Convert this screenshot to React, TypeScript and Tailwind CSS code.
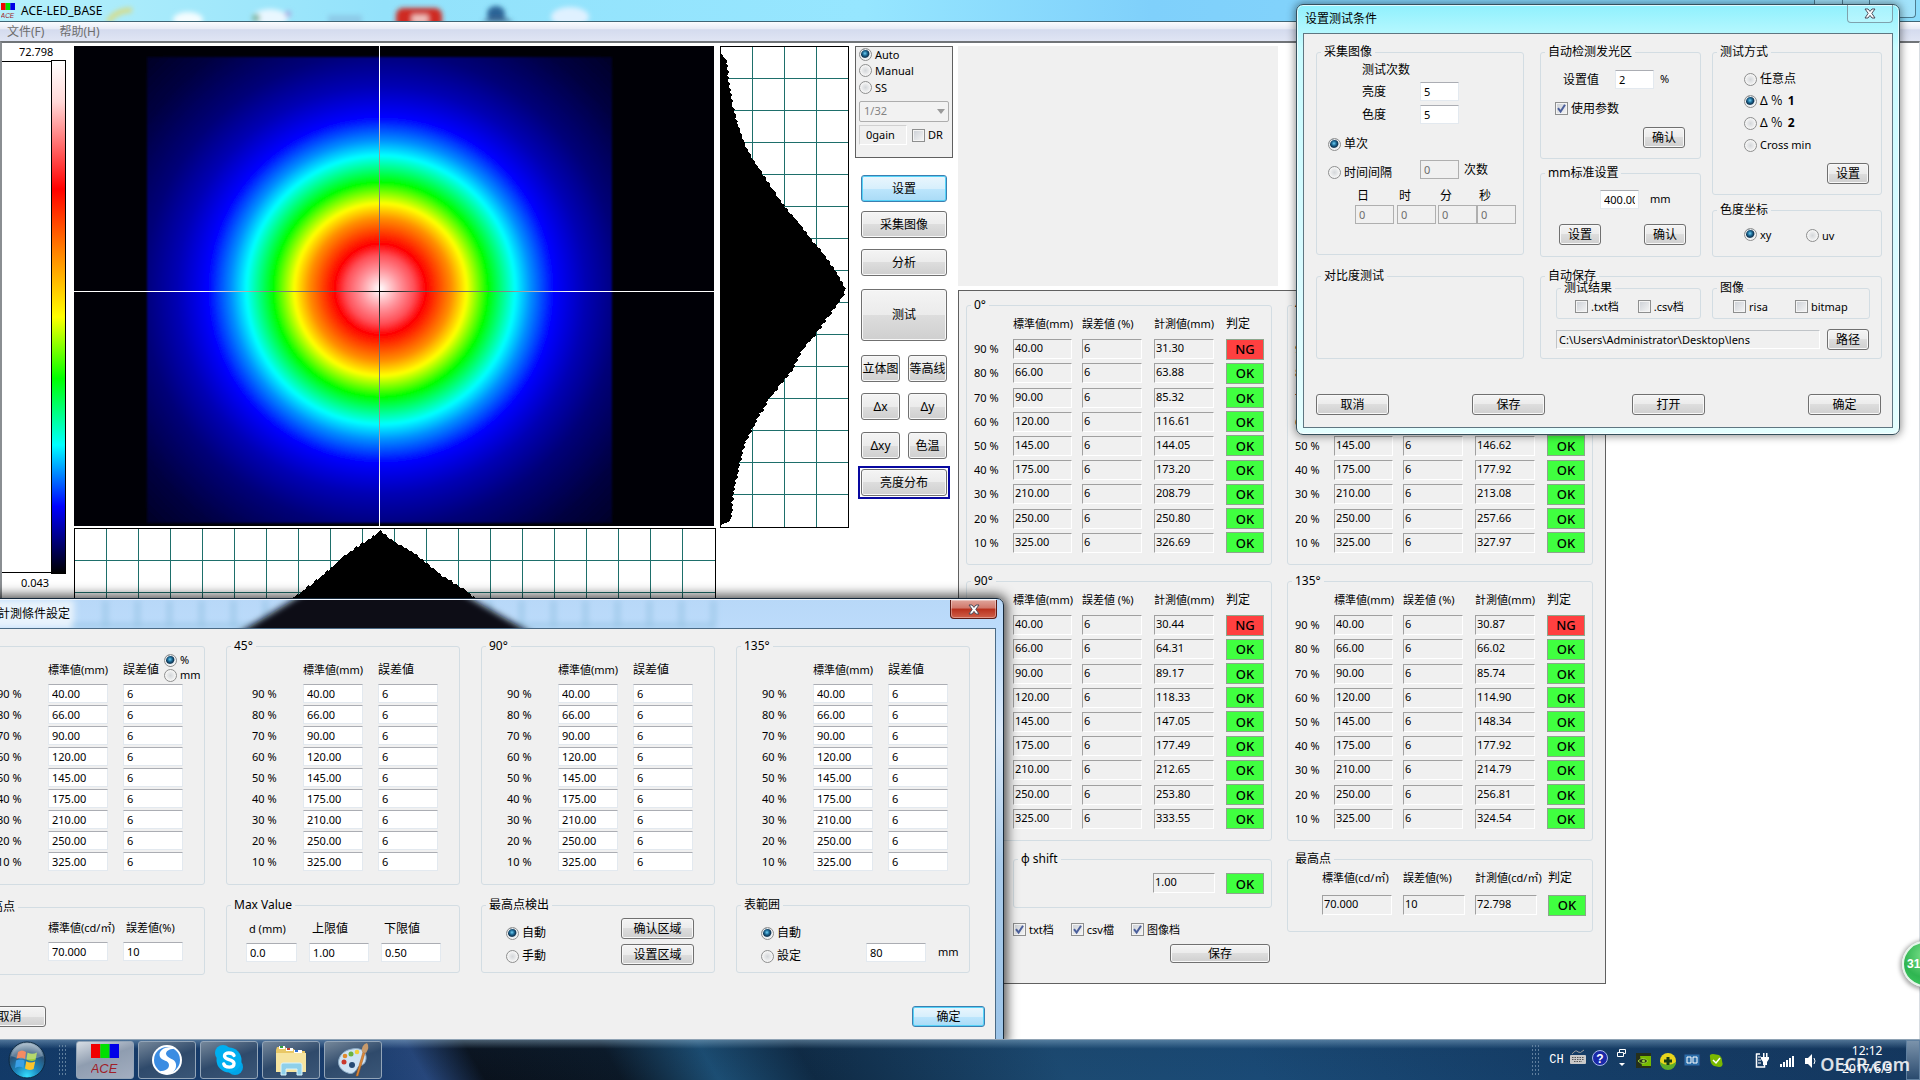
import type { ReactNode } from "react";

const PERCENTS = [90, 80, 70, 60, 50, 40, 30, 20, 10];
const STANDARD = ["40.00", "66.00", "90.00", "120.00", "145.00", "175.00", "210.00", "250.00", "325.00"];

const MEASURED: Record<string, string[]> = {
  "0°": ["31.30", "63.88", "85.32", "116.61", "144.05", "173.20", "208.79", "250.80", "326.69"],
  "45°": ["31.10", "64.75", "86.60", "117.04", "146.62", "177.92", "213.08", "257.66", "327.97"],
  "90°": ["30.44", "64.31", "89.17", "118.33", "147.05", "177.49", "212.65", "253.80", "333.55"],
  "135°": ["30.87", "66.02", "85.74", "114.90", "148.34", "177.92", "214.79", "256.81", "324.54"],
};

/* ---------- shared controls ---------- */

function Group({ title, className = "", body = "", children }: { title: string; className?: string; body?: string; children?: ReactNode }) {
  return (
    <fieldset className={`min-w-0 rounded-[3px] border border-[#d3dde3] ${className}`}>
      <legend className="ml-1 px-[3px] text-[12px] leading-3 whitespace-nowrap">{title}</legend>
      <div className={body}>{children}</div>
    </fieldset>
  );
}

function Btn({ children, className = "", primary = false }: { children: ReactNode; className?: string; primary?: boolean }) {
  const look = primary
    ? "border-[#3c7fb1] bg-[linear-gradient(#eaf6fd,#d7effc_50%,#bde6fd_50%,#a9dbf6)] shadow-[inset_0_0_0_1px_#55d3f8]"
    : "border-[#707070] bg-[linear-gradient(#f4f4f4,#ebebeb_50%,#dddddd_50%,#cfcfcf)] shadow-[inset_0_0_0_1px_#f8f8f8]";
  return (
    <button type="button" className={`flex shrink-0 items-center justify-center rounded-[3px] border text-[12px] leading-3 whitespace-nowrap ${look} ${className}`}>
      {children}
    </button>
  );
}

function Radio({ name, label, checked = false, className = "" }: { name: string; label: ReactNode; checked?: boolean; className?: string }) {
  return (
    <label className={`flex items-center gap-[3px] leading-3 whitespace-nowrap ${className}`}>
      <input
        type="radio"
        name={name}
        defaultChecked={checked}
        className="h-[13px] w-[13px] shrink-0 appearance-none rounded-full border border-[#8e8f8f] bg-[radial-gradient(circle,#d4d7da,#f6f6f6_70%)] shadow-[inset_0_0_0_1px_#f4f4f4] checked:bg-[radial-gradient(circle_at_45%_40%,#6fd0f5_0,#1d6a96_25%,#0f3350_44%,#e8eef2_56%)]"
      />
      {label}
    </label>
  );
}

function Check({ label, checked = false, className = "" }: { label: ReactNode; checked?: boolean; className?: string }) {
  return (
    <label className={`flex items-center gap-[3px] leading-3 whitespace-nowrap ${className}`}>
      <span className="grid shrink-0">
        <input
          type="checkbox"
          defaultChecked={checked}
          className="peer col-start-1 row-start-1 h-[13px] w-[13px] appearance-none border border-[#8e8f8f] bg-[linear-gradient(135deg,#cbcfd5,#f6f6f6)] shadow-[inset_0_0_0_1px_#f4f4f4]"
        />
        <svg viewBox="0 0 13 13" className="pointer-events-none invisible col-start-1 row-start-1 h-[13px] w-[13px] peer-checked:visible">
          <path d="M3 6.2 L5.6 9.6 L10 2.8" fill="none" stroke="#4b5f9b" strokeWidth="2" />
        </svg>
      </span>
      {label}
    </label>
  );
}

function Field({ value, label, className = "", disabled = false }: { value: string; label: string; className?: string; disabled?: boolean }) {
  const look = disabled ? "border-[#afafaf] bg-[#f0f0f0] text-[#6d6d6d]" : "border-[#e3e9ef] border-t-[#abadb3] bg-white";
  return (
    <input
      type="text"
      aria-label={label}
      defaultValue={value}
      disabled={disabled}
      className={`block h-[19px] shrink-0 border px-[3px] text-[11px] leading-4 ${look} ${className}`}
    />
  );
}

function Sunken({ value, label, className = "" }: { value: string; label: string; className?: string }) {
  return (
    <input
      type="text"
      readOnly
      aria-label={label}
      defaultValue={value}
      className={`block h-5 border border-white border-t-[#a0a0a0] border-l-[#a0a0a0] bg-[#f0f0f0] px-px pb-[3px] text-[11px] leading-4 ${className}`}
    />
  );
}

function Verdict({ ok }: { ok: boolean }) {
  return (
    <div className={`flex h-[21px] w-[38px] items-center justify-center border border-[#8ca68c] text-[13px] leading-4 font-medium ${ok ? "bg-[#40ff40]" : "bg-[#ff4040]"}`}>
      {ok ? "OK" : "NG"}
    </div>
  );
}

/* ---------- drawings ---------- */

function HeatMap() {
  return (
    <svg viewBox="0 0 640 480" className="block h-[480px] w-[640px]">
      <defs>
        <radialGradient id="lum" gradientUnits="userSpaceOnUse" cx="308" cy="245" r="340" fx="306" fy="243">
          <stop offset="0" stopColor="#fff" />
          <stop offset=".025" stopColor="#ffd0d4" />
          <stop offset=".06" stopColor="#ff9098" />
          <stop offset=".10" stopColor="#ff5058" />
          <stop offset=".134" stopColor="#f00" />
          <stop offset=".16" stopColor="#ff3000" />
          <stop offset=".21" stopColor="#ff9000" />
          <stop offset=".253" stopColor="#ff0" />
          <stop offset=".316" stopColor="#0f0" />
          <stop offset=".395" stopColor="#0ff" />
          <stop offset=".44" stopColor="#0090ff" />
          <stop offset=".51" stopColor="#00f" />
          <stop offset=".6" stopColor="#0000b4" />
          <stop offset=".7" stopColor="#000078" />
          <stop offset=".85" stopColor="#000040" />
          <stop offset="1" stopColor="#000020" />
        </radialGradient>
        <linearGradient id="crossX" x1="0" x2="1" y1="0" y2="0">
          <stop offset=".2" stopColor="#fff" />
          <stop offset=".3" stopColor="#888" />
          <stop offset=".43" stopColor="#555" />
          <stop offset=".478" stopColor="#000" />
          <stop offset=".53" stopColor="#555" />
          <stop offset=".68" stopColor="#888" />
          <stop offset=".78" stopColor="#fff" />
        </linearGradient>
        <linearGradient id="crossY" x1="0" x2="0" y1="0" y2="1">
          <stop offset=".1" stopColor="#fff" />
          <stop offset=".22" stopColor="#999" />
          <stop offset=".42" stopColor="#666" />
          <stop offset=".51" stopColor="#000" />
          <stop offset=".6" stopColor="#666" />
          <stop offset=".8" stopColor="#999" />
          <stop offset=".92" stopColor="#fff" />
        </linearGradient>
        <filter id="soften" x="-5%" y="-5%" width="110%" height="110%">
          <feGaussianBlur stdDeviation="1" />
        </filter>
      </defs>
      <rect width="640" height="480" fill="#000006" />
      <rect x="73" y="11" width="465" height="466" fill="url(#lum)" filter="url(#soften)" />
      <rect x="0" y="245" width="640" height="1" fill="url(#crossX)" />
      <rect x="305" y="0" width="1" height="480" fill="url(#crossY)" />
    </svg>
  );
}

function jagged(points: number[][], vertical: boolean) {
  const out: string[] = [];
  for (let i = 0; i < points.length - 1; i++) {
    const [x0, y0] = points[i];
    const [x1, y1] = points[i + 1];
    const steps = Math.max(1, Math.round(Math.abs(vertical ? y1 - y0 : x1 - x0) / 2));
    for (let s = 0; s < steps; s++) {
      const n = ((i * 7 + s * 5) % 3) - 1;
      const x = x0 + ((x1 - x0) * s) / steps + (vertical ? n : 0);
      const y = y0 + ((y1 - y0) * s) / steps + (vertical ? 0 : n);
      out.push(`${x.toFixed(0)},${y.toFixed(0)}`);
    }
  }
  out.push(points[points.length - 1].join(","));
  return out.join(" ");
}

const V_PROFILE = [
  [1, 7], [7, 16], [8, 32], [13, 61], [18, 79], [24, 97], [32, 112], [42, 127], [55, 147], [65, 161], [78, 176],
  [90, 192], [103, 207], [117, 227], [125, 242], [125, 247], [118, 257], [109, 269], [97, 287], [82, 304], [72, 324],
  [59, 341], [48, 354], [34, 379], [24, 399], [19, 421], [13, 447], [11, 474], [3, 478],
];

const H_PROFILE = [
  [183, 92], [221, 69], [238, 55], [257, 40], [268, 29], [290, 14], [307, 3], [320, 14], [339, 24], [355, 37],
  [370, 49], [387, 59], [400, 69], [437, 92],
];

function VerticalProfile() {
  return (
    <svg viewBox="0 0 129 482" className="block h-[482px] w-[129px] shrink-0" shapeRendering="crispEdges">
      <rect width="129" height="482" fill="#fff" />
      {[32, 64, 96].map((x) => <rect key={x} x={x} y="0" width="1" height="482" fill="#1e6f6b" />)}
      {Array.from({ length: 14 }, (_, i) => <rect key={i} x="0" y={(i + 1) * 32} width="129" height="1" fill="#1e6f6b" />)}
      <polygon points={`0,7 ${jagged(V_PROFILE, true)} 0,480`} />
      <rect x=".5" y=".5" width="128" height="481" fill="none" stroke="#000" />
    </svg>
  );
}

function HorizontalProfile() {
  return (
    <svg viewBox="0 0 642 130" className="mt-0.5 block h-[130px] w-[642px]" shapeRendering="crispEdges">
      <rect width="642" height="130" fill="#fff" />
      {Array.from({ length: 19 }, (_, i) => <rect key={i} x={(i + 1) * 32} y="0" width="1" height="130" fill="#1e6f6b" />)}
      {[32, 64, 96].map((y) => <rect key={y} x="0" y={y} width="642" height="1" fill="#1e6f6b" />)}
      <polygon points={`120,130 ${jagged(H_PROFILE, false)} 500,130`} />
      <rect x=".5" y=".5" width="641" height="129" fill="none" stroke="#000" />
    </svg>
  );
}

function AceLogo({ className }: { className: string }) {
  return (
    <svg viewBox="0 0 28 32" className={className}>
      <rect x="0" y="0" width="9.4" height="14" fill="#f00000" />
      <rect x="9.3" y="0" width="9.4" height="14" fill="#00e000" />
      <rect x="18.6" y="0" width="9.4" height="14" fill="#0000e8" />
      <text x="13" y="29" textAnchor="middle" fontSize="13" fontStyle="italic" fontFamily="Liberation Sans" fill="#a02028">ACE</text>
    </svg>
  );
}

/* ---------- main window ---------- */

function TitleBar() {
  return (
    <header className="grid h-[22px] shrink-0 border-b border-[#3f6575] bg-[linear-gradient(90deg,#b5f0fb,#93e2fb_20%,#96e6ff_45%,#7fd0fb_60%,#8bdcfb)]">
      <svg className="col-start-1 row-start-1 h-[21px] w-full" preserveAspectRatio="xMinYMin slice" viewBox="0 0 1920 21">
        <defs>
          <filter id="haze" x="-30%" y="-30%" width="160%" height="160%"><feGaussianBlur stdDeviation="2.5" /></filter>
        </defs>
        <g filter="url(#haze)">
          <path d="M108 22 Q116 10 132 10" stroke="#d7dc86" strokeWidth="5" fill="none" />
          <ellipse cx="188" cy="20" rx="15" ry="8" fill="#f4fdff" />
          <ellipse cx="270" cy="18" rx="18" ry="9" fill="#e9f7ff" />
          <circle cx="256" cy="18" r="4" fill="#7eb7a4" />
          <circle cx="288" cy="14" r="3" fill="#a9a5e0" />
          <rect x="328" y="15" width="34" height="10" fill="#8dcbe8" />
          <rect x="396" y="8" width="46" height="22" rx="7" fill="#cf2c20" />
          <rect x="412" y="15" width="16" height="8" fill="#f0c3bf" />
          <ellipse cx="496" cy="14" rx="9" ry="8" fill="#2c6496" />
          <path d="M482 22 Q496 12 514 22" fill="#3e668e" />
          <ellipse cx="570" cy="17" rx="19" ry="10" fill="#dff1ff" />
        </g>
      </svg>
      <div className="col-start-1 row-start-1 flex items-start">
        <div className="flex items-center gap-1.5 self-center pl-px">
          <AceLogo className="h-4 w-3.5" />
          <h1 className="text-[12px] leading-4">ACE-LED_BASE</h1>
        </div>
        <div className="mr-1 ml-auto grid h-[18px] w-[102px] grid-cols-[28px_27px_47px] divide-x divide-[#4d7d92] rounded-b-[4px] border border-t-0 border-[#4d7d92] bg-white/20">
          <button type="button" aria-label="最小化" />
          <button type="button" aria-label="最大化" />
          <button type="button" aria-label="关闭窗口" />
        </div>
      </div>
    </header>
  );
}

function MenuBar() {
  return (
    <nav className="flex h-[19px] shrink-0 items-center gap-[15px] bg-[linear-gradient(#fbfcfe,#e6eaf5_38%,#d4dbee_40%,#e0e5f4)] pl-[7px] text-[12px] leading-4 text-[#6d6d6d]">
      <button type="button">文件(F)</button>
      <button type="button">帮助(H)</button>
    </nav>
  );
}

function ColorScale() {
  return (
    <div className="flex h-[560px] w-[72px] shrink-0 flex-col text-[11px]">
      <div className="h-[14px] pl-[17px] leading-3">72.798</div>
      <div className="flex">
        <div className="my-px h-[512px] w-[49px] border-y border-black" />
        <div className="h-[514px] w-[15px] border border-black bg-[linear-gradient(#fff,#ffd8d8_8%,#f00_25%,#ff8000_37%,#ff0_50%,#0f0_62%,#0ff_75%,#00f_87%,#000)]" />
      </div>
      <div className="pl-[19px] leading-[18px]">0.043</div>
    </div>
  );
}

function Controls() {
  return (
    <div className="flex w-[98px] shrink-0 flex-col items-center">
      <div className="flex h-28 w-full flex-col border border-[#606060] bg-[#f0f0f0] pl-[3px] text-[11px]">
        <Radio name="exposure" label="Auto" checked className="h-[15px]" />
        <Radio name="exposure" label="Manual" className="h-[17px]" />
        <Radio name="exposure" label="SS" className="h-[17px]" />
        <div className="mt-[5px] grid w-[90px]">
          <select aria-label="Shutter" disabled className="col-start-1 row-start-1 h-[21px] appearance-none rounded-[2px] border border-[#adadad] bg-[#f2f2f2] px-1 text-[11px] text-[#838383] opacity-100">
            <option>1/32</option>
          </select>
          <svg viewBox="0 0 8 5" className="pointer-events-none col-start-1 row-start-1 mr-1 h-[5px] w-2 self-center justify-self-end"><path d="M0 0H8L4 5Z" fill="#9a9a9a" /></svg>
        </div>
        <div className="mt-[3px] flex items-center gap-[5px]">
          <div className="h-5 w-12 border border-white border-t-[#d0d0d0] border-l-[#d0d0d0] pl-1.5 leading-[18px]">0gain</div>
          <Check label="DR" />
        </div>
      </div>
      <div className="mt-[17px] grid grid-cols-2 gap-x-2">
        <Btn primary className="col-span-2 h-[27px] w-[86px]">设置</Btn>
        <Btn className="col-span-2 mt-[9px] h-[27px] w-[86px]">采集图像</Btn>
        <Btn className="col-span-2 mt-[11px] h-[27px] w-[86px]">分析</Btn>
        <Btn className="col-span-2 mt-[13px] h-[52px] w-[86px]">测试</Btn>
        <Btn className="mt-3.5 h-[27px]">立体图</Btn>
        <Btn className="mt-3.5 h-[27px]">等高线</Btn>
        <Btn className="mt-[11px] h-[27px]">Δx</Btn>
        <Btn className="mt-[11px] h-[27px]">Δy</Btn>
        <Btn className="mt-3 h-[27px]">Δxy</Btn>
        <Btn className="mt-3 h-[27px]">色温</Btn>
      </div>
      <div className="mt-[7px] border-2 border-[#0808a0] p-px">
        <Btn className="h-[27px] w-[86px]">亮度分布</Btn>
      </div>
    </div>
  );
}

function ResultTable({ angle }: { angle: string }) {
  return (
    <Group title={angle} className="h-[266px] w-[306px]" body="pl-[7px]">
      <table className="h-[244px] w-[290px] table-fixed border-collapse text-left text-[11px] leading-4">
        <colgroup>
          <col className="w-[39px]" />
          <col className="w-[69px]" />
          <col className="w-[72px]" />
          <col className="w-[72px]" />
          <col className="w-[38px]" />
        </colgroup>
        <thead>
          <tr className="h-[26px] whitespace-nowrap">
            <td />
            <th className="font-normal">標準値(mm)</th>
            <th className="font-normal">誤差値 (%)</th>
            <th className="font-normal">計測値(mm)</th>
            <th className="text-[12px] font-normal">判定</th>
          </tr>
        </thead>
        <tbody>
          {PERCENTS.map((p, i) => (
            <tr key={p}>
              <th className="font-normal">{p} %</th>
              <td><Sunken value={STANDARD[i]} label={`${angle} ${p}% 標準値`} className="w-[59px]" /></td>
              <td><Sunken value="6" label={`${angle} ${p}% 誤差値`} className="w-[60px]" /></td>
              <td><Sunken value={MEASURED[angle][i]} label={`${angle} ${p}% 計測値`} className="w-[60px]" /></td>
              <td><Verdict ok={i > 0} /></td>
            </tr>
          ))}
        </tbody>
      </table>
    </Group>
  );
}

function Results() {
  return (
    <section className="h-[694px] w-[648px] border border-[#606060] bg-[#f0f0f0] px-[7px] pt-2 text-[11px]">
      <div className="grid grid-cols-[306px_306px] gap-x-[15px] gap-y-2.5">
        <ResultTable angle="0°" />
        <ResultTable angle="45°" />
        <ResultTable angle="90°" />
        <ResultTable angle="135°" />
      </div>
      <div className="mt-3 grid grid-cols-[306px_306px] gap-x-[15px]">
        <div className="flex flex-col pl-[47px]">
          <Group title="φ shift" className="h-[55px]" body="flex items-start justify-end gap-[11px] pt-2 pr-[7px]">
            <Sunken value="1.00" label="φ shift" className="w-[62px]" />
            <Verdict ok />
          </Group>
          <div className="mt-[15px] flex gap-[17px]">
            <Check label="txt档" checked />
            <Check label="csv檔" checked />
            <Check label="图像档" checked />
          </div>
          <Btn className="mt-2 mr-0.5 h-[19px] w-[100px] self-end">保存</Btn>
        </div>
        <Group title="最高点" className="h-[79px]" body="pl-[34px]">
          <table className="w-[264px] table-fixed text-left text-[11px] leading-4 whitespace-nowrap">
            <colgroup>
              <col className="w-[81px]" />
              <col className="w-[72px]" />
              <col className="w-[73px]" />
              <col className="w-[38px]" />
            </colgroup>
            <thead>
              <tr className="h-[26px]">
                <th className="font-normal">標準値(cd/㎡)</th>
                <th className="font-normal">誤差値(%)</th>
                <th className="font-normal">計測値(cd/㎡)</th>
                <th className="text-[12px] font-normal">判定</th>
              </tr>
            </thead>
            <tbody>
              <tr className="h-7">
                <td><Sunken value="70.000" label="最高点 標準値" className="w-[70px]" /></td>
                <td><Sunken value="10" label="最高点 誤差値" className="w-[62px]" /></td>
                <td><Sunken value="72.798" label="最高点 計測値" className="w-[62px]" /></td>
                <td><Verdict ok /></td>
              </tr>
            </tbody>
          </table>
        </Group>
      </div>
    </section>
  );
}

/* ---------- measuring conditions dialog ---------- */

function ConditionTable({ angle, units = false }: { angle: string; units?: boolean }) {
  return (
    <Group title={angle} className="h-[245px]" body="pl-[25px]">
      <table className="w-[186px] table-fixed border-collapse text-left text-[11px] leading-4">
        <colgroup>
          <col className="w-[51px]" />
          <col className="w-[75px]" />
          <col className="w-[60px]" />
        </colgroup>
        <thead>
          <tr className="h-[31px] whitespace-nowrap">
            <td />
            <th className="pt-1 font-normal">標準値(mm)</th>
            <th className="font-normal">
              <div className="flex items-center gap-[5px]">
                <span className="pt-1 text-[12px]">誤差値</span>
                {units && (
                  <div>
                    <Radio name="unit" label="%" checked className="h-[15px]" />
                    <Radio name="unit" label="mm" className="h-[15px]" />
                  </div>
                )}
              </div>
            </th>
          </tr>
        </thead>
        <tbody>
          {PERCENTS.map((p, i) => (
            <tr key={p} className="h-[21px]">
              <th className="font-normal">{p} %</th>
              <td><Field value={STANDARD[i]} label={`${angle} ${p}% 標準値`} className="w-[60px]" /></td>
              <td><Field value="6" label={`${angle} ${p}% 誤差値`} className="w-[60px]" /></td>
            </tr>
          ))}
        </tbody>
      </table>
    </Group>
  );
}

function ConditionDialog() {
  return (
    <section className="absolute top-[598px] left-[-53px] rounded-tr-[7px] border border-[#16293b] bg-[linear-gradient(#b8d8f8,#bddcfb_8%,#dbeafa_30%,#a9cbea_60%,#9cc4e8)] pr-[7px] pb-px pl-1.5 shadow-[0_0_12px_3px_rgba(0,0,0,0.7)]">
      <div className="grid h-[29px] border-t border-white/80">
        <svg viewBox="0 0 1042 28" className="col-start-1 row-start-1 h-7 w-full" preserveAspectRatio="none">
          <defs>
            <filter id="glass" x="-10%" y="-30%" width="120%" height="160%"><feGaussianBlur stdDeviation="3" /></filter>
          </defs>
          <rect width="120" height="28" fill="#e8f3fc" filter="url(#glass)" />
          <g filter="url(#glass)" fill="#8fc0e0">
            {Array.from({ length: 20 }, (_, i) => <rect key={i} x={150 + i * 32} y="0" width="3" height="28" />)}
            <rect x="118" y="24" width="642" height="3" />
          </g>
          <path d="M352 -8 L506 -8 L582 36 L280 36 Z" fill="#080d14" filter="url(#glass)" />
        </svg>
        <div className="z-10 col-start-1 row-start-1 flex items-start justify-between">
          <h2 className="pt-1.5 pl-11 text-[12px] leading-4">計測條件設定</h2>
          <button type="button" aria-label="关闭" className="-mr-px flex h-[19px] w-[47px] items-center justify-center rounded-b-[4px] border border-t-0 border-[#5c1a14] bg-[linear-gradient(#e0a59b,#d0776a_45%,#b8301c_50%,#d0604a)] shadow-[inset_0_0_0_1px_rgba(255,255,255,0.35)]">
            <CloseGlyph />
          </button>
        </div>
      </div>
      <div className="border border-[#4a6a85] bg-[#f0f0f0] px-4 pt-[11px] pb-3 text-[11px]">
        <div className="grid grid-cols-[234px_234px_234px_234px] gap-x-[21px] gap-y-3.5 pr-2">
          <ConditionTable angle="0°" units />
          <ConditionTable angle="45°" />
          <ConditionTable angle="90°" />
          <ConditionTable angle="135°" />

          <Group title="最高点" className="mt-0.5 h-[74px]" body="grid grid-cols-[75px_60px] gap-y-1.5 pt-[7px] pl-[76px] leading-4 whitespace-nowrap">
            <span>標準値(cd/㎡)</span>
            <span className="pl-[3px]">誤差値(%)</span>
            <Field value="70.000" label="最高点 標準値" className="w-[60px]" />
            <Field value="10" label="最高点 誤差値" className="w-[60px]" />
          </Group>
          <Group title="Max Value" className="h-[74px]" body="grid grid-cols-[63px_72px_60px] gap-y-1.5 pt-2.5 pl-[19px] leading-4 whitespace-nowrap">
            <span className="pl-[3px]">d (mm)</span>
            <span className="pl-[3px] text-[12px]">上限値</span>
            <span className="pl-[3px] text-[12px]">下限値</span>
            <Field value="0.0" label="d (mm)" className="w-[51px]" />
            <Field value="1.00" label="上限値" className="w-[60px]" />
            <Field value="0.50" label="下限値" className="w-[60px]" />
          </Group>
          <Group title="最高点検出" className="h-[74px]" body="flex items-start justify-between pt-[7px] pr-5 pl-6 text-[12px]">
            <div>
              <Radio name="peak" label="自動" checked className="h-[30px]" />
              <Radio name="peak" label="手動" className="h-4" />
            </div>
            <div className="flex flex-col gap-[5px]">
              <Btn className="h-[21px] w-[73px]">确认区域</Btn>
              <Btn className="h-[21px] w-[73px]">设置区域</Btn>
            </div>
          </Group>
          <Group title="表範囲" className="h-[74px]" body="flex items-start pt-[7px] pl-6 text-[12px]">
            <div>
              <Radio name="range" label="自動" checked className="h-[30px]" />
              <Radio name="range" label="設定" className="h-4" />
            </div>
            <Field value="80" label="表範囲" className="mt-[25px] mr-3 ml-[65px] w-[60px]" />
            <span className="mt-[25px] text-[11px] leading-[18px]">mm</span>
          </Group>
        </div>
        <div className="mt-[31px] flex justify-between pl-0.5">
          <Btn className="h-[21px] w-[73px]">取消</Btn>
          <Btn primary className="-mr-1.5 h-[21px] w-[73px]">确定</Btn>
        </div>
      </div>
    </section>
  );
}

function CloseGlyph() {
  return (
    <svg viewBox="0 0 12 11" className="h-[11px] w-3">
      <path d="M1 1H4L6 3.4L8 1H11L7.8 5.3L11 10H8L6 7.4L4 10H1L4.2 5.3Z" fill="#fff" stroke="#4c4c5a" strokeWidth="1" />
    </svg>
  );
}

/* ---------- test settings dialog ---------- */

function TestDialog() {
  return (
    <section className="absolute top-1 right-5 z-30 rounded-[7px] border border-[#35505c] bg-[linear-gradient(#8ff0fd,#c9fcff_10%,#d9fbff_60%,#e4ffff)] px-1.5 pb-1.5 shadow-[0_0_8px_1px_rgba(0,0,0,0.45),inset_0_0_0_1px_rgba(255,255,255,0.7)]">
      <div className="flex h-7 items-start justify-between">
        <h2 className="pt-1.5 pl-0.5 text-[12px] leading-4">设置测试条件</h2>
        <button type="button" aria-label="关闭" className="flex h-[18px] w-[46px] items-center justify-center rounded-b-[4px] border border-t-0 border-[#7fa2ad] bg-white/20">
          <CloseGlyph />
        </button>
      </div>
      <div className="border border-[#5f7681] bg-[#f0f0f0] pt-3 pr-2.5 pb-3 pl-3 text-[12px]">
        <div className="grid grid-cols-[208px_342px] gap-x-4">
          <Group title="采集图像" className="h-[209px]">
            <div className="grid grid-cols-[58px_40px] items-center pt-1 pl-[45px] whitespace-nowrap">
              <span className="col-span-2 h-[18px] leading-4">测试次数</span>
              <span className="h-[23px] pt-1 leading-4">亮度</span>
              <Field value="5" label="亮度" className="w-[39px]" />
              <span className="h-[23px] pt-1 leading-4">色度</span>
              <Field value="5" label="色度" className="w-[39px]" />
            </div>
            <Radio name="times" label="单次" checked className="mt-2.5 ml-[11px] h-4" />
            <div className="mt-2 flex items-center pl-[11px]">
              <Radio name="times" label="时间间隔" className="mt-1.5 w-[92px]" />
              <Field value="0" label="次数" disabled className="w-[39px]" />
              <span className="ml-[5px] leading-4">次数</span>
            </div>
            <div className="mt-2 grid grid-cols-[42px_41px_39px_39px] pl-[38px]">
              {["日", "时", "分", "秒"].map((u) => (
                <label key={u} className="leading-[18px]">
                  <span className="pl-0.5">{u}</span>
                  <Field value="0" label={u} disabled className="w-[39px]" />
                </label>
              ))}
            </div>
          </Group>

          <div className="grid grid-cols-[161px_170px] gap-x-[11px]">
            <div className="flex flex-col gap-2">
              <Group title="自动检测发光区" className="h-[113px]">
                <div className="flex items-center pt-3 pl-[22px]">
                  <span className="w-[52px] leading-4">设置值</span>
                  <Field value="2" label="设置值" className="w-[39px]" />
                  <span className="ml-1.5 text-[11px]">%</span>
                </div>
                <Check label="使用参数" checked className="mt-[13px] ml-3.5" />
                <Btn className="mt-3 mr-[15px] ml-auto h-[21px] w-[42px]">确认</Btn>
              </Group>
              <Group title="mm标准设置" className="h-[90px]">
                <div className="flex items-center pt-[11px] pl-[59px]">
                  <Field value="400.00" label="mm标准" className="w-[39px]" />
                  <span className="ml-[11px] text-[11px]">mm</span>
                </div>
                <div className="mt-[15px] flex justify-between pr-3.5 pl-[18px]">
                  <Btn className="h-[21px] w-[42px]">设置</Btn>
                  <Btn className="h-[21px] w-[42px]">确认</Btn>
                </div>
              </Group>
            </div>
            <div className="flex flex-col gap-[9px]">
              <Group title="测试方式" className="h-[149px]">
                <div className="flex flex-col pt-2.5 pl-[31px]">
                  <Radio name="method" label="任意点" className="h-[22px]" />
                  <Radio name="method" checked className="h-[22px]" label={<span className="flex gap-[3px]">Δ <span>％</span> <b className="pl-0.5">1</b></span>} />
                  <Radio name="method" className="h-[22px]" label={<span className="flex gap-[3px]">Δ <span>％</span> <b className="pl-0.5">2</b></span>} />
                  <Radio name="method" className="h-[22px] text-[11px]" label="Cross min" />
                </div>
                <Btn className="mt-[7px] mr-3 ml-auto h-[21px] w-[42px]">设置</Btn>
              </Group>
              <Group title="色度坐标" className="h-[53px]" body="flex items-center pt-[11px] pl-[31px] text-[11px]">
                <Radio name="coord" label="xy" checked className="w-[62px]" />
                <Radio name="coord" label="uv" className="mt-0.5" />
              </Group>
            </div>
          </div>

          <Group title="对比度测试" className="mt-[13px] h-[89px]" />
          <Group title="自动保存" className="mt-[13px] h-[89px]">
            <div className="grid grid-cols-[145px_158px] gap-x-[11px] pl-[15px]">
              <Group title="测试结果" className="h-[37px]" body="flex gap-[19px] pt-1.5 pl-[18px] text-[11px]">
                <Check label=".txt档" />
                <Check label=".csv档" />
              </Group>
              <Group title="图像" className="h-[37px]" body="flex pt-1.5 pl-5 text-[11px]">
                <Check label="risa" className="w-[62px]" />
                <Check label="bitmap" />
              </Group>
            </div>
            <div className="mt-2.5 flex items-center justify-between pr-3 pl-[15px]">
              <input type="text" readOnly aria-label="保存路径" defaultValue="C:\Users\Administrator\Desktop\lens" className="h-[19px] w-[264px] border border-white border-t-[#c0c4c8] border-l-[#c0c4c8] bg-[#f0f0f0] px-0.5 text-[11px]" />
              <Btn className="h-[21px] w-[42px]">路径</Btn>
            </div>
          </Group>
        </div>
        <div className="mt-[35px] grid grid-cols-[156px_160px_176px_73px]">
          <Btn className="h-[21px] w-[73px]">取消</Btn>
          <Btn className="h-[21px] w-[73px]">保存</Btn>
          <Btn className="h-[21px] w-[73px]">打开</Btn>
          <Btn className="h-[21px] w-[73px]">确定</Btn>
        </div>
      </div>
    </section>
  );
}

/* ---------- taskbar ---------- */

function Grip() {
  return <div className="h-8 w-2 bg-[radial-gradient(circle,#5f7f9d_0.5px,transparent_1px)] bg-[length:3px_4px]" />;
}

function TaskButton({ label, active = false, children }: { label: string; active?: boolean; children: ReactNode }) {
  const look = active
    ? "bg-[linear-gradient(160deg,#d7dde4,#8f9db0_45%,#a3aec0)]"
    : "bg-[linear-gradient(160deg,#75879a,#2f4a6b_50%,#3a5677)]";
  return (
    <button type="button" aria-label={label} className={`flex h-[38px] w-[58px] items-center justify-center rounded-[3px] border border-[#93a5b8] ${look}`}>
      {children}
    </button>
  );
}

function Taskbar() {
  return (
    <footer className="relative z-20 flex h-[41px] shrink-0 items-center border-t border-[#8ea2b4] bg-[linear-gradient(rgba(150,185,210,0.45),rgba(20,50,80,0.1)_22%,transparent),linear-gradient(60deg,#123a68,#1a3d6e_19%,#27477c_22%,#0a121d_25%,#0b1826_32%,#1c4e74_37%,#0f2a44_42%,#1c4a72_55%,#1a4a76_65%,#153e68_80%,#14375f)]">
      <button type="button" aria-label="开始" className="ml-2">
        <svg viewBox="0 0 38 38" className="block h-[38px] w-[38px]">
          <defs>
            <radialGradient id="orb" cx=".5" cy=".95" r=".95">
              <stop offset="0" stopColor="#35e0ff" />
              <stop offset=".35" stopColor="#1c86bd" />
              <stop offset=".7" stopColor="#2a5276" />
              <stop offset="1" stopColor="#a9bccb" />
            </radialGradient>
          </defs>
          <circle cx="19" cy="19" r="18" fill="url(#orb)" stroke="#0c2840" />
          <path d="M10 11 Q14 8 18 11 L17 18 Q13 15.500 8.500 18Z" fill="#f0642e" />
          <path d="M19.500 11.500 Q24 14 29 11.500 L27.500 19 Q23 21 18.500 18.500Z" fill="#9ccb3c" />
          <path d="M8 19.500 Q12.500 17.500 16.600 19.500 L15.500 27 Q11.500 24.500 7 27Z" fill="#3aa0e6" />
          <path d="M18.200 20.200 Q22.500 22.500 27.200 20.500 L25.600 28 Q21 30 17 27.600Z" fill="#fbc42c" />
          <path d="M3 15 A16.500 16.500 0 0 1 35 15 Q19 22 3 15Z" fill="#fff" opacity=".25" />
        </svg>
      </button>
      <div className="mr-[10px] ml-3"><Grip /></div>
      <div className="flex gap-1">
        <TaskButton label="ACE-LED_BASE" active><AceLogo className="h-8 w-7" /></TaskButton>
        <TaskButton label="Sogou">
          <svg viewBox="0 0 32 32" className="h-8 w-8">
            <circle cx="16" cy="16" r="15" fill="#fff" />
            <circle cx="16" cy="16" r="13" fill="#3b8ce2" />
            <path d="M21 3 C11 3 7 8 9 13 C11 17 18 16 18 21 C18 25 14 27 9 27 L12 30 C20 31 26 27 25 20 C24 14 16 15 15 10 C15 7 18 5 23 5Z" fill="#fff" />
          </svg>
        </TaskButton>
        <TaskButton label="Skype">
          <svg viewBox="0 0 32 32" className="h-8 w-8">
            <circle cx="10" cy="9" r="8" fill="#00aff0" />
            <circle cx="22" cy="23" r="8" fill="#00a5e8" />
            <circle cx="16" cy="16" r="12.500" fill="#00aff0" />
            <path d="M21 11.500 C20 8.500 11.500 7.500 11.500 12 C11.500 16.500 21 14.500 21 19.500 C21 24.500 12 24 10.800 20" fill="none" stroke="#fff" strokeWidth="3.400" strokeLinecap="round" />
          </svg>
        </TaskButton>
        <TaskButton label="Explorer">
          <svg viewBox="0 0 34 32" className="h-8 w-[34px]">
            <path d="M2 6 L3 3 H11 L13 5 H20 L21 7 H31 L32 28 H2Z" fill="#e9c866" />
            <rect x="5" y="2" width="6" height="3" fill="#fff" /><rect x="6" y="2" width="3" height="2" fill="#30a040" />
            <rect x="12" y="4" width="7" height="3" fill="#fff" /><rect x="13" y="4" width="3" height="2" fill="#c04030" />
            <rect x="20" y="6" width="8" height="3" fill="#fff" /><rect x="21" y="6" width="3" height="2" fill="#3070d0" />
            <path d="M2 9 H32 V28 H2Z" fill="#f6e4a0" />
            <path d="M7 31 V21 Q7 19 9 19 H26 Q28 19 28 21 V31 H23 V25 H12 V31Z" fill="#8fd0ea" stroke="#d9f3fc" />
          </svg>
        </TaskButton>
        <TaskButton label="Paint">
          <svg viewBox="0 0 34 34" className="h-[34px] w-[34px]">
            <path d="M16 6 C25 4 31 9 30 16 C29 23 24 22 22 24 C20 28 17 32 12 30 C5 28 1 22 3 16 C5 10 10 7 16 6Z" fill="#cfe3f4" stroke="#8aa9c4" />
            <circle cx="8" cy="19" r="2.500" fill="#c9372c" /><circle cx="9" cy="13" r="2.300" fill="#e08a2c" />
            <circle cx="15" cy="11" r="2.500" fill="#6cb33f" /><circle cx="21" cy="9" r="2.300" fill="#f1cf3c" />
            <circle cx="16" cy="22" r="3" fill="#274a74" />
            <path d="M20 33 L27 9 L29 10 L22 33Z" fill="#dc8a3a" stroke="#a5591a" strokeWidth=".5" />
            <path d="M26 9 Q25 2 31 0 Q34 4 30 10Z" fill="#c79a6c" />
          </svg>
        </TaskButton>
      </div>

      <div className="ml-auto flex h-full items-center text-white">
        <Grip />
        <span className="ml-2.5 w-[21px] font-['Liberation_Mono',monospace] text-[12px] leading-4">CH</span>
        <svg viewBox="0 0 156 24" className="h-6 w-[156px]">
          <g>
            <path d="M2 6 Q6 1 8 4 Q10 6 14 2" stroke="#9a9a9a" fill="none" />
            <rect x="0" y="7" width="16" height="9" rx="1" fill="#c9c9c9" />
            <path d="M2 9.500H14M2 11.500H14M4 13.500H12" stroke="#555" strokeDasharray="1.500 1" />
          </g>
          <circle cx="30" cy="10" r="7.500" fill="#1a28a8" stroke="#a7b8e8" />
          <text x="30" y="14.500" textAnchor="middle" fontSize="12" fontWeight="700" fontFamily="Liberation Sans" fill="#fff">?</text>
          <path d="M49.500 4.500V1.500H55.500V5.500H54M47.500 4.500H53.500V8.500H47.500Z" stroke="#fff" fill="none" />
          <path d="M49 15H55L52 18Z" fill="#fff" />
          <rect x="66" y="5" width="15" height="15" fill="#26301a" />
          <path d="M70 8H81V18H72Z" fill="#76b900" />
          <path d="M68 13 Q73 8 78 13 Q73 18 68 13Z" fill="#26301a" stroke="#9ad03a" />
          <circle cx="73.500" cy="13" r="1.500" fill="#9ad03a" />
          <circle cx="98" cy="13" r="8" fill="#e8d51c" />
          <path d="M90 14 A8 8 0 0 0 106 14 Q98 20 90 14Z" fill="#5fae28" />
          <path d="M98 9V17M94 13H102" stroke="#163a16" strokeWidth="3" />
          <rect x="114" y="6" width="16" height="12" fill="#2a6ca8" stroke="#1a3b66" />
          <path d="M117 9H121V15H117ZM123 9H127V15H123Z" stroke="#fff" fill="none" />
          <path d="M140 9 Q139 6 143 6 L149 7 Q152 9 152 13 Q154 19 149 19 L144 18 Q140 16 140 9Z" fill="#7ab800" />
          <path d="M143 12L146 15L150 10" stroke="#fff" strokeWidth="1.500" fill="none" />
        </svg>
        <svg viewBox="0 0 66 20" className="ml-7 h-5 w-[66px]">
          <path d="M2 4H6M2.500 3.500V17H10.500V14" stroke="#fff" fill="none" strokeWidth="1.500" />
          <path d="M4 7H7M4 10H7M4 13H7" stroke="#fff" />
          <path d="M7 7H15V9L13 12V15H9V12L7 9ZM9 3H10.500V7H9ZM12 3H13.500V7H12Z" fill="#fff" />
          <path d="M26 14H28V17H26ZM29 12H31V17H29ZM32 10H34V17H32ZM35 8H37V17H35ZM38 6H40V17H38Z" fill="#fff" />
          <path d="M51 8H54L58 4V18L54 14H51Z" fill="#fff" />
          <path d="M60 8Q62 11 60 14" stroke="#fff" fill="none" />
        </svg>
        <div className="grid h-full">
          <div className="col-start-1 row-start-1 ml-3 grid justify-items-center self-center pr-2 text-[12px] leading-[18px]">
            <span>12:12</span>
            <span>2017/6/5</span>
          </div>
          <div className="z-10 col-start-1 row-start-1 mt-3 font-['Noto_Sans',sans-serif] text-[18px] leading-6 font-semibold text-white/85">OECR.com</div>
        </div>
        <button type="button" aria-label="显示桌面" className="-ml-1 h-full w-3.5 border border-[#5f7f9f] bg-[linear-gradient(#7b93ab,#2a4a6e)]" />
      </div>
    </footer>
  );
}

export default function App() {
  return (
    <div className="relative flex h-screen flex-col overflow-hidden bg-white font-['Noto_Sans','Noto_Sans_CJK_SC','Noto_Sans_CJK_JP',sans-serif] text-black">
      <TitleBar />
      <MenuBar />
      <main className="flex min-h-0 flex-1 items-start overflow-hidden border-t-2 border-r border-l-2 border-t-[#707478] border-r-[#d8dde2] border-l-[#8a8e92] bg-white pt-[3px]">
        <ColorScale />
        <div className="w-[642px] shrink-0">
          <HeatMap />
          <HorizontalProfile />
        </div>
        <div className="ml-1"><VerticalProfile /></div>
        <div className="ml-1.5"><Controls /></div>
        <div className="ml-[5px] flex flex-col gap-1">
          <div className="h-60 w-80 bg-[#f0f0f0]" />
          <Results />
        </div>
      </main>
      <Taskbar />
      <ConditionDialog />
      <TestDialog />
      <button type="button" className="absolute right-[-28px] bottom-[93px] h-[46px] w-[46px] rounded-full border-2 border-[#e6f5ea] bg-[radial-gradient(circle_at_50%_30%,#7be08a,#2fb551_60%,#3fce62)] pl-[3px] text-left font-['Liberation_Sans',sans-serif] text-[12px] font-bold text-white shadow-[0_1px_4px_2px_rgba(0,0,0,0.35)]">
        31
      </button>
    </div>
  );
}
